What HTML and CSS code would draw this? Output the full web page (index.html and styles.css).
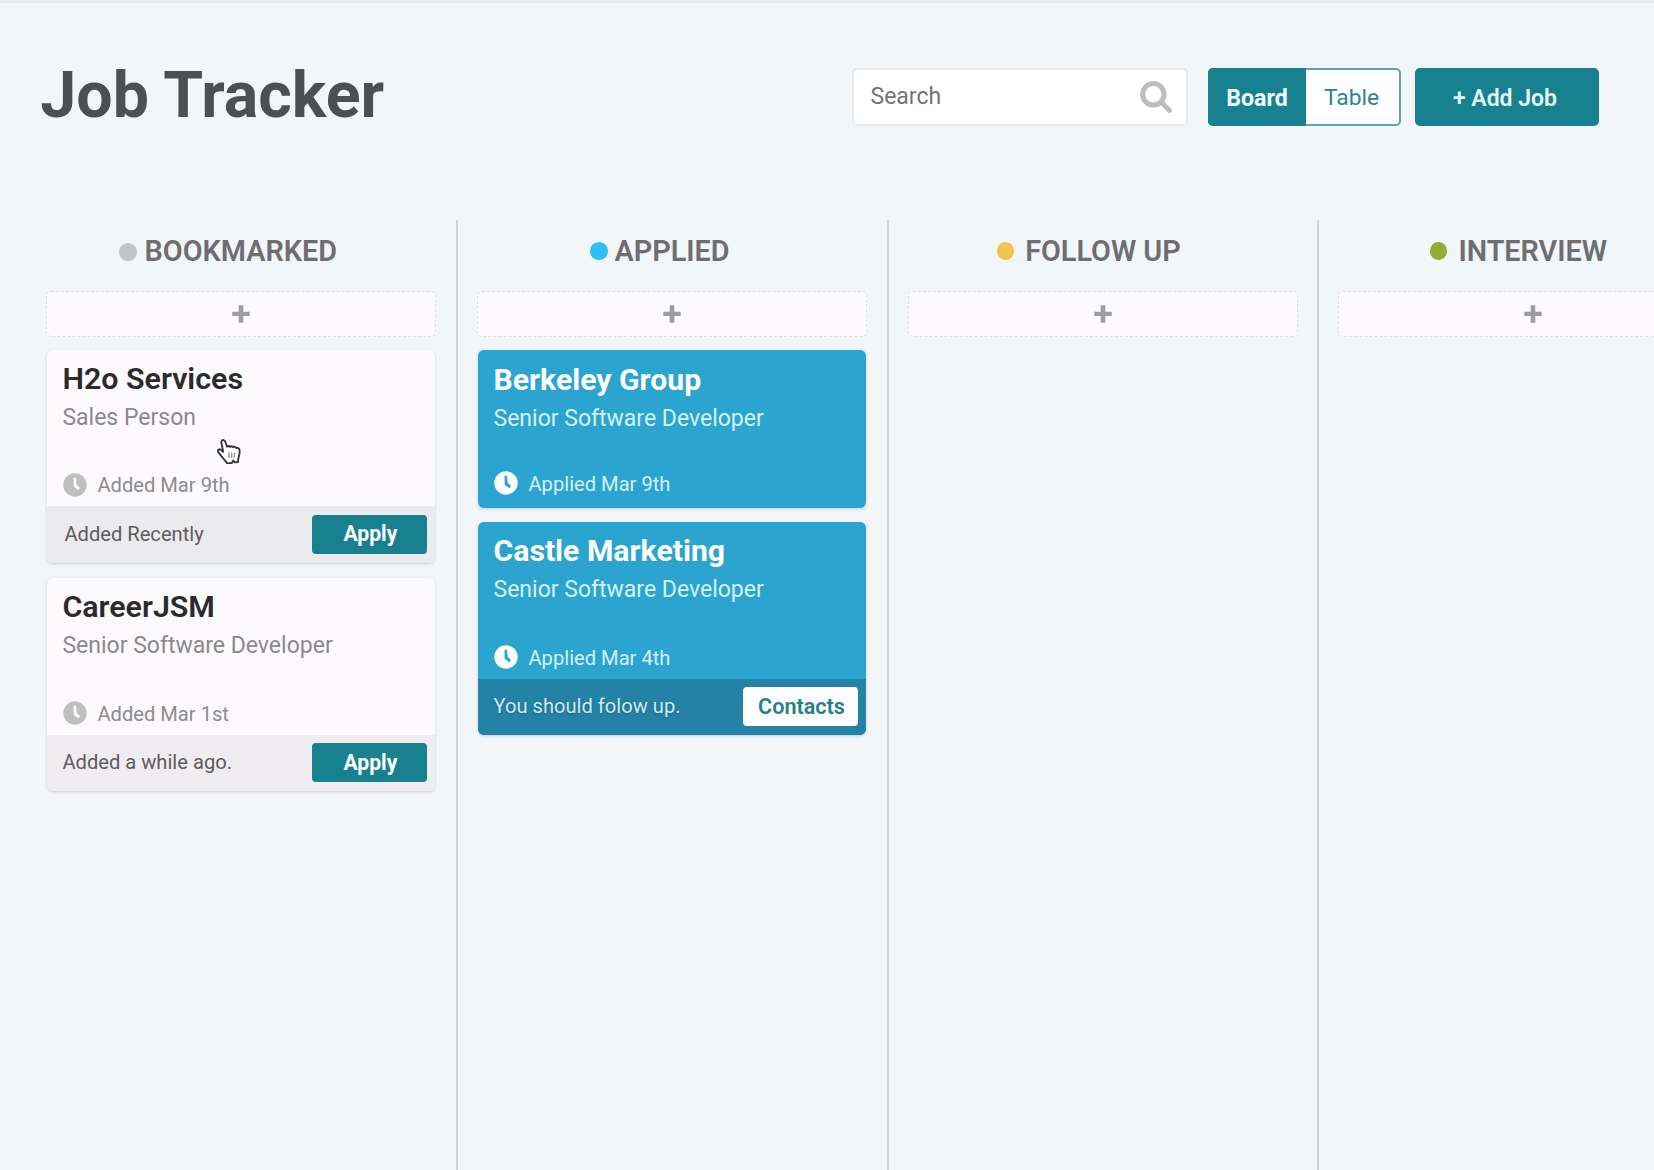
FILE: index.html
```html
<!DOCTYPE html>
<html lang="en">
<head>
<meta charset="utf-8">
<title>Job Tracker</title>
<link rel="stylesheet" href="styles.css">
</head>
<body>
<svg class="sprite" aria-hidden="true">
  <symbol id="clock" viewBox="0 0 24 24">
    <path fill-rule="evenodd" d="M12 .3a11.700 11.700 0 1 0 0 23.400A11.700 11.700 0 0 0 12 .3zM10.500 4.800h2.600l.5 7 3.400 3.200-1.600 2.200-4.700-3.400z"/>
  </symbol>
  <symbol id="plus" viewBox="0 0 18 18">
    <path d="M6.700 .3h4.600v6.500h6.400v4.200h-6.400v6.700H6.700V11H.3V6.800h6.400z"/>
  </symbol>
</svg>

<header class="topbar">
  <h1 class="title">Job Tracker</h1>
  <div class="search">
    <span class="search-text">Search</span>
    <svg class="search-icon" viewBox="0 0 32 32">
      <circle cx="13.3" cy="13.3" r="10.7"/>
      <path d="M21.3 21.3l8 8"/>
    </svg>
  </div>
  <div class="toggle">
    <button class="toggle-item active">Board</button>
    <button class="toggle-item">Table</button>
  </div>
  <button class="add-job">+ Add Job</button>
</header>

<main class="board">
  <section class="column">
    <h2 class="heading bookmarked"><span class="dot"></span>BOOKMARKED</h2>
    <button class="add" aria-label="Add"><svg class="plus"><use href="#plus"/></svg></button>
    <article class="card">
      <div class="body">
        <h3 class="company">H2o Services</h3>
        <p class="role">Sales Person</p>
        <p class="date"><svg class="clock"><use href="#clock"/></svg>Added Mar 9th</p>
      </div>
      <footer class="foot neutral"><span class="note">Added Recently</span><button class="action">Apply</button></footer>
      <svg class="cursor" viewBox="0 0 24 25">
        <path class="hand" d="M4.700 1.900C5.700 .5 7.600 .9 8.200 2.500l1.800 5.200c.8-1 2.300-.9 3.100.2.900-1 2.500-.8 3.200.4.900-.8 2.500-.6 3.100.8 1.400-.7 2.900.1 3.100 1.700.3 2.400.1 4.300-.6 6.500-.6 1.900-1 3.200-.9 5.700l-3.200.4-1.500-1.800-1.500 2.500H9.900c-1.500-2.500-3.400-4.400-5.400-6.700L1.200 12.700c-.9-1.600.8-3 2.300-2.100l2.600 2.200C5.800 9.700 5.100 7 4.500 4.400c-.2-.9-.2-1.800.2-2.500z"/>
        <path class="lines" d="M11.800 13.500v5.300M14.600 13.500v5.300M17.400 13.500v5.300"/>
      </svg>
    </article>
    <article class="card">
      <div class="body">
        <h3 class="company">CareerJSM</h3>
        <p class="role">Senior Software Developer</p>
        <p class="date"><svg class="clock"><use href="#clock"/></svg>Added Mar 1st</p>
      </div>
      <footer class="foot"><span class="note">Added a while ago.</span><button class="action">Apply</button></footer>
    </article>
  </section>

  <section class="column">
    <h2 class="heading applied"><span class="dot"></span>APPLIED</h2>
    <button class="add" aria-label="Add"><svg class="plus"><use href="#plus"/></svg></button>
    <article class="card blue compact">
      <div class="body">
        <h3 class="company">Berkeley Group</h3>
        <p class="role">Senior Software Developer</p>
        <p class="date"><svg class="clock"><use href="#clock"/></svg>Applied Mar 9th</p>
      </div>
    </article>
    <article class="card blue">
      <div class="body">
        <h3 class="company">Castle Marketing</h3>
        <p class="role">Senior Software Developer</p>
        <p class="date"><svg class="clock"><use href="#clock"/></svg>Applied Mar 4th</p>
      </div>
      <footer class="foot"><span class="note">You should folow up.</span><button class="action">Contacts</button></footer>
    </article>
  </section>

  <section class="column">
    <h2 class="heading follow-up"><span class="dot"></span>FOLLOW UP</h2>
    <button class="add" aria-label="Add"><svg class="plus"><use href="#plus"/></svg></button>
  </section>

  <section class="column">
    <h2 class="heading interview"><span class="dot"></span>INTERVIEW</h2>
    <button class="add" aria-label="Add"><svg class="plus"><use href="#plus"/></svg></button>
  </section>
</main>
</body>
</html>
```
FILE: styles.css
```css
* { box-sizing: border-box; margin: 0; padding: 0; }

html, body { height: 100%; overflow: hidden; }

body {
  display: flex;
  flex-direction: column;
  background: #f2f6f9;
  border-top: 3px solid #e8e9ed;
  font-family: Roboto, sans-serif;
  color: #4d4e50;
}

button { font-family: inherit; border: 0; }

.sprite { display: none; }

/* Header */
.topbar {
  flex: none;
  display: flex;
  align-items: flex-start;
  height: 217px;
  padding: 65px 55.5px 0 40.3px;
}

.title {
  flex: 1;
  margin-top: -7px;
  font-size: 64.5px;
  line-height: 68px;
  font-weight: 700;
  color: #4e4f50;
}

.search {
  display: flex;
  justify-content: space-between;
  width: 336px;
  height: 58px;
  padding: 12px 14px 0 17px;
  background: #fff;
  border: 2px solid #e9eaec;
  border-radius: 5px;
}

.search-text { font-size: 23px; line-height: 30px; color: #737476; }

.search-icon {
  width: 32px;
  height: 32px;
  margin-top: -1px;
  fill: none;
  stroke: #bdbdbd;
  stroke-width: 5;
  stroke-linecap: round;
}

.toggle {
  display: flex;
  width: 193px;
  height: 58px;
  margin-left: 20px;
  border: 2px solid #5fa5af;
  border-left-color: #17818f;
  border-radius: 5px;
  background: #17818f;
}

.toggle-item {
  flex: 1;
  padding: 1px 1px 0 0;
  border-radius: 0 3px 3px 0;
  background: #fff;
  color: #2b8491;
  font-size: 22.8px;
}

.toggle-item.active {
  flex: none;
  width: 98px;
  height: 58px;
  margin: -2px 0 0 -2px;
  padding: 2px 0 0 1px;
  border-radius: 5px 0 0 5px;
  background: #17818f;
  color: #f0fdff;
  font-size: 23.2px;
  font-weight: 700;
}

.add-job {
  width: 184px;
  height: 58px;
  margin-left: 14px;
  padding: 2px 3px 0 0;
  border-radius: 5px;
  background: #17818f;
  color: #e4f7f8;
  font-size: 23px;
  font-weight: 600;
}

/* Board */
.board {
  flex: 1;
  display: grid;
  grid-template-columns: repeat(3, 430.6px) 1fr;
  margin-left: 27.4px;
  overflow: hidden;
}

.column { min-width: 430.6px; padding: 14px 19.5px 0 19px; border-right: 2px solid #d0d3d6; }

.heading {
  display: flex;
  align-items: center;
  justify-content: center;
  height: 34px;
  gap: 8px;
  padding-right: 27px;
  font-size: 28.8px;
  line-height: 34px;
  font-weight: 600;
  color: #6f6d6f;
}

.heading.applied { gap: 7px; padding-right: 24.5px; }
.heading.follow-up { gap: 11px; padding-right: 28px; }
.heading.interview { gap: 11px; padding-right: 29.5px; }

.dot { flex: none; width: 17.6px; height: 17.6px; border-radius: 50%; background: #c4c4c4; }
.bookmarked .dot { margin-top: 2px; }
.applied .dot { background: #2dc0f2; }
.follow-up .dot { background: #efc550; }
.interview .dot { background: #93ad31; }

.add {
  display: flex;
  align-items: center;
  justify-content: center;
  width: 100%;
  height: 46px;
  margin: 22.5px 0 13px;
  border: 1.5px dashed #e2dfe4;
  border-radius: 5px;
  background: #fcfafd;
}

.plus { width: 18px; height: 18px; fill: #9d9c9e; }

/* Cards */
.card {
  position: relative;
  width: 388.5px;
  margin: 0 0 15.6px .5px;
  border-radius: 6px;
  background: #fcfafd;
  box-shadow: 0 1px 3px rgba(60, 60, 80, .22);
}

.body { height: 156.5px; padding: 11px 16px 0 15.5px; }

.company { font-size: 30.4px; line-height: 36px; font-weight: 600; color: #2b2b2e; }

.role { font-size: 23px; line-height: 30px; margin-top: 6px; color: #8b898d; }

.date {
  display: flex;
  align-items: center;
  gap: 10px;
  margin-top: 38.5px;
  padding-left: 1px;
  font-size: 20.15px;
  line-height: 28px;
  color: #8d8b8f;
}

.clock { width: 24px; height: 24px; margin-top: -1px; fill: #bfbfbf; }

.foot {
  display: flex;
  align-items: flex-start;
  justify-content: space-between;
  height: 56.5px;
  padding: 8.5px 8px 0 15.5px;
  border-radius: 0 0 6px 6px;
  background: #efedef;
}

.foot.neutral { background: #ebebed; padding-left: 17.5px; }

.note { font-size: 20.15px; line-height: 39px; color: #5d5c60; }

.action {
  width: 115px;
  height: 39px;
  padding-left: 1px;
  border-radius: 4px;
  background: #17818f;
  color: #fff;
  font-size: 21.2px;
  line-height: 38px;
  font-weight: 700;
}

.blue { background: #2ba5cf; margin-left: 1px; margin-bottom: 14px; }
.blue .company { color: #fff; font-weight: 700; font-size: 30.2px; }
.blue .role { color: #d5f2fb; }
.blue .date { color: #d5f0fa; }
.blue .clock { fill: #fff; }
.blue .foot { background: #2382a6; }
.blue .note { color: #d3e9f1; text-shadow: 0 1px 2px rgba(0, 0, 0, .25); }
.blue .action { background: #fff; color: #23818e; font-size: 21.6px; font-weight: 600; }

.compact .body { height: 158.5px; padding-top: 12.5px; }
.compact .date { margin-top: 35.5px; }

/* Pointer over the first card */
.cursor { position: absolute; left: 170.5px; top: 89.5px; width: 24px; height: 25px; }
.hand { fill: #fff; stroke: #363639; stroke-width: 1.9; stroke-linejoin: round; }
.lines { stroke: #98989b; stroke-width: 1.5; }
```
